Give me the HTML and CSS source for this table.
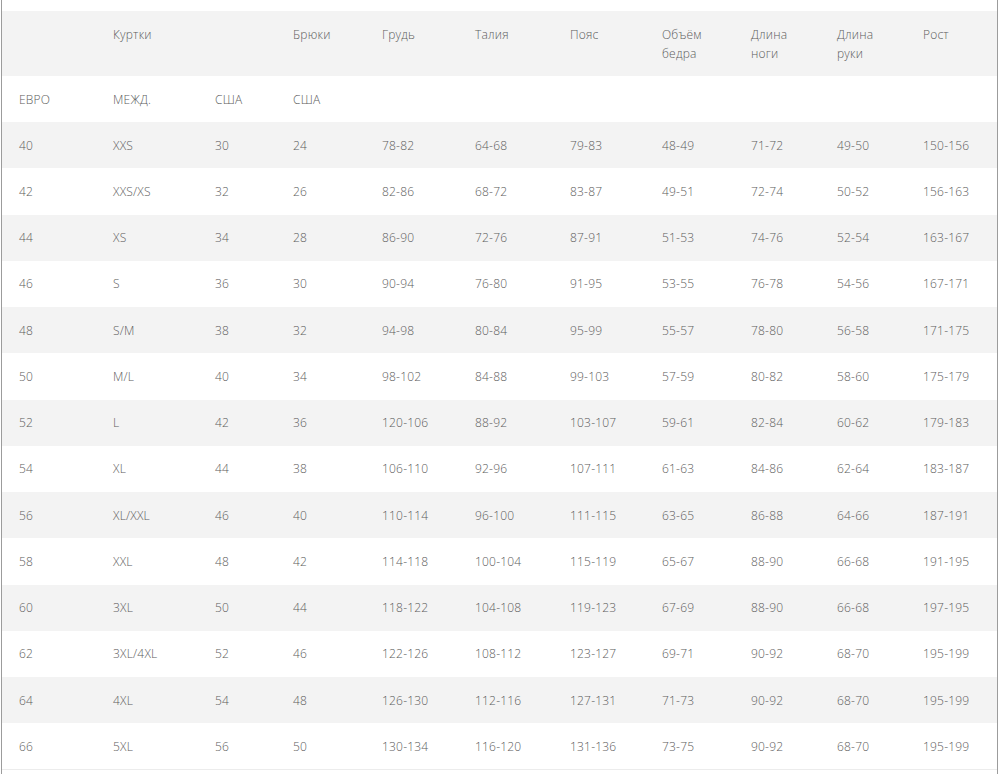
FILE: index.html
```html
<!DOCTYPE html>
<html lang="ru">
<head>
<meta charset="utf-8">
<title>Таблица размеров</title>
<link rel="stylesheet" href="styles.css">
</head>
<body>
<div class="frame">
<table class="sizes">
<colgroup>
<col class="c1"><col class="c2"><col class="c3"><col class="c4"><col class="c5"><col class="c6"><col class="c7"><col class="c8"><col class="c9"><col class="c10"><col class="c11">
</colgroup>
<thead>
<tr class="head">
<th></th><th>Куртки</th><th></th><th>Брюки</th><th>Грудь</th><th>Талия</th><th>Пояс</th><th>Объём<br>бедра</th><th>Длина<br>ноги</th><th>Длина<br>руки</th><th>Рост</th>
</tr>
<tr class="sub">
<th>ЕВРО</th><th>МЕЖД.</th><th>США</th><th>США</th><th></th><th></th><th></th><th></th><th></th><th></th><th></th>
</tr>
</thead>
<tbody>
<tr><td>40</td><td>XXS</td><td>30</td><td>24</td><td>78-82</td><td>64-68</td><td>79-83</td><td>48-49</td><td>71-72</td><td>49-50</td><td>150-156</td></tr>
<tr><td>42</td><td>XXS/XS</td><td>32</td><td>26</td><td>82-86</td><td>68-72</td><td>83-87</td><td>49-51</td><td>72-74</td><td>50-52</td><td>156-163</td></tr>
<tr><td>44</td><td>XS</td><td>34</td><td>28</td><td>86-90</td><td>72-76</td><td>87-91</td><td>51-53</td><td>74-76</td><td>52-54</td><td>163-167</td></tr>
<tr><td>46</td><td>S</td><td>36</td><td>30</td><td>90-94</td><td>76-80</td><td>91-95</td><td>53-55</td><td>76-78</td><td>54-56</td><td>167-171</td></tr>
<tr><td>48</td><td>S/M</td><td>38</td><td>32</td><td>94-98</td><td>80-84</td><td>95-99</td><td>55-57</td><td>78-80</td><td>56-58</td><td>171-175</td></tr>
<tr><td>50</td><td>M/L</td><td>40</td><td>34</td><td>98-102</td><td>84-88</td><td>99-103</td><td>57-59</td><td>80-82</td><td>58-60</td><td>175-179</td></tr>
<tr><td>52</td><td>L</td><td>42</td><td>36</td><td>120-106</td><td>88-92</td><td>103-107</td><td>59-61</td><td>82-84</td><td>60-62</td><td>179-183</td></tr>
<tr><td>54</td><td>XL</td><td>44</td><td>38</td><td>106-110</td><td>92-96</td><td>107-111</td><td>61-63</td><td>84-86</td><td>62-64</td><td>183-187</td></tr>
<tr><td>56</td><td>XL/XXL</td><td>46</td><td>40</td><td>110-114</td><td>96-100</td><td>111-115</td><td>63-65</td><td>86-88</td><td>64-66</td><td>187-191</td></tr>
<tr><td>58</td><td>XXL</td><td>48</td><td>42</td><td>114-118</td><td>100-104</td><td>115-119</td><td>65-67</td><td>88-90</td><td>66-68</td><td>191-195</td></tr>
<tr><td>60</td><td>3XL</td><td>50</td><td>44</td><td>118-122</td><td>104-108</td><td>119-123</td><td>67-69</td><td>88-90</td><td>66-68</td><td>197-195</td></tr>
<tr><td>62</td><td>3XL/4XL</td><td>52</td><td>46</td><td>122-126</td><td>108-112</td><td>123-127</td><td>69-71</td><td>90-92</td><td>68-70</td><td>195-199</td></tr>
<tr><td>64</td><td>4XL</td><td>54</td><td>48</td><td>126-130</td><td>112-116</td><td>127-131</td><td>71-73</td><td>90-92</td><td>68-70</td><td>195-199</td></tr>
<tr><td>66</td><td>5XL</td><td>56</td><td>50</td><td>130-134</td><td>116-120</td><td>131-136</td><td>73-75</td><td>90-92</td><td>68-70</td><td>195-199</td></tr>
</tbody>
</table>
</div>
</body>
</html>
```
FILE: styles.css
```css
html, body {
  margin: 0;
  padding: 0;
  background: #ffffff;
}

.frame {
  box-sizing: border-box;
  margin-left: 1px;
  width: 997px;
  min-height: 774px;
  padding-top: 11px;
  border-left: 1px solid #9c9c9c;
  border-right: 1px solid #9c9c9c;
}

.sizes {
  width: 995px;
  table-layout: fixed;
  border-collapse: collapse;
  border-spacing: 0;
  font-family: "Open Sans", "Liberation Sans", sans-serif;
  font-size: 12px;
  color: #5c5c5c;
  border-bottom: 1px solid #ececec;
}

.c1 { width: 94px; }
.c2 { width: 102px; }
.c3 { width: 78px; }
.c4 { width: 89px; }
.c5 { width: 93px; }
.c6 { width: 95px; }
.c7 { width: 92px; }
.c8 { width: 89px; }
.c9 { width: 86px; }
.c10 { width: 86px; }
.c11 { width: 91px; }

.sizes th,
.sizes td {
  text-align: left;
  font-weight: 300;
  letter-spacing: 0.2px;
  padding: 0 4px 0 17px;
  line-height: 19px;
  white-space: nowrap;
}

.head {
  background: #f3f3f3;
}

.head th {
  height: 65px;
  box-sizing: border-box;
  padding-top: 14px;
  padding-bottom: 13px;
  vertical-align: top;
}

.sub th {
  height: 46px;
  box-sizing: border-box;
  vertical-align: middle;
}

.sizes tbody td {
  height: 46.25px;
  box-sizing: border-box;
  vertical-align: middle;
}

.sizes tbody tr:nth-child(odd) {
  background: #f3f3f3;
}
```
